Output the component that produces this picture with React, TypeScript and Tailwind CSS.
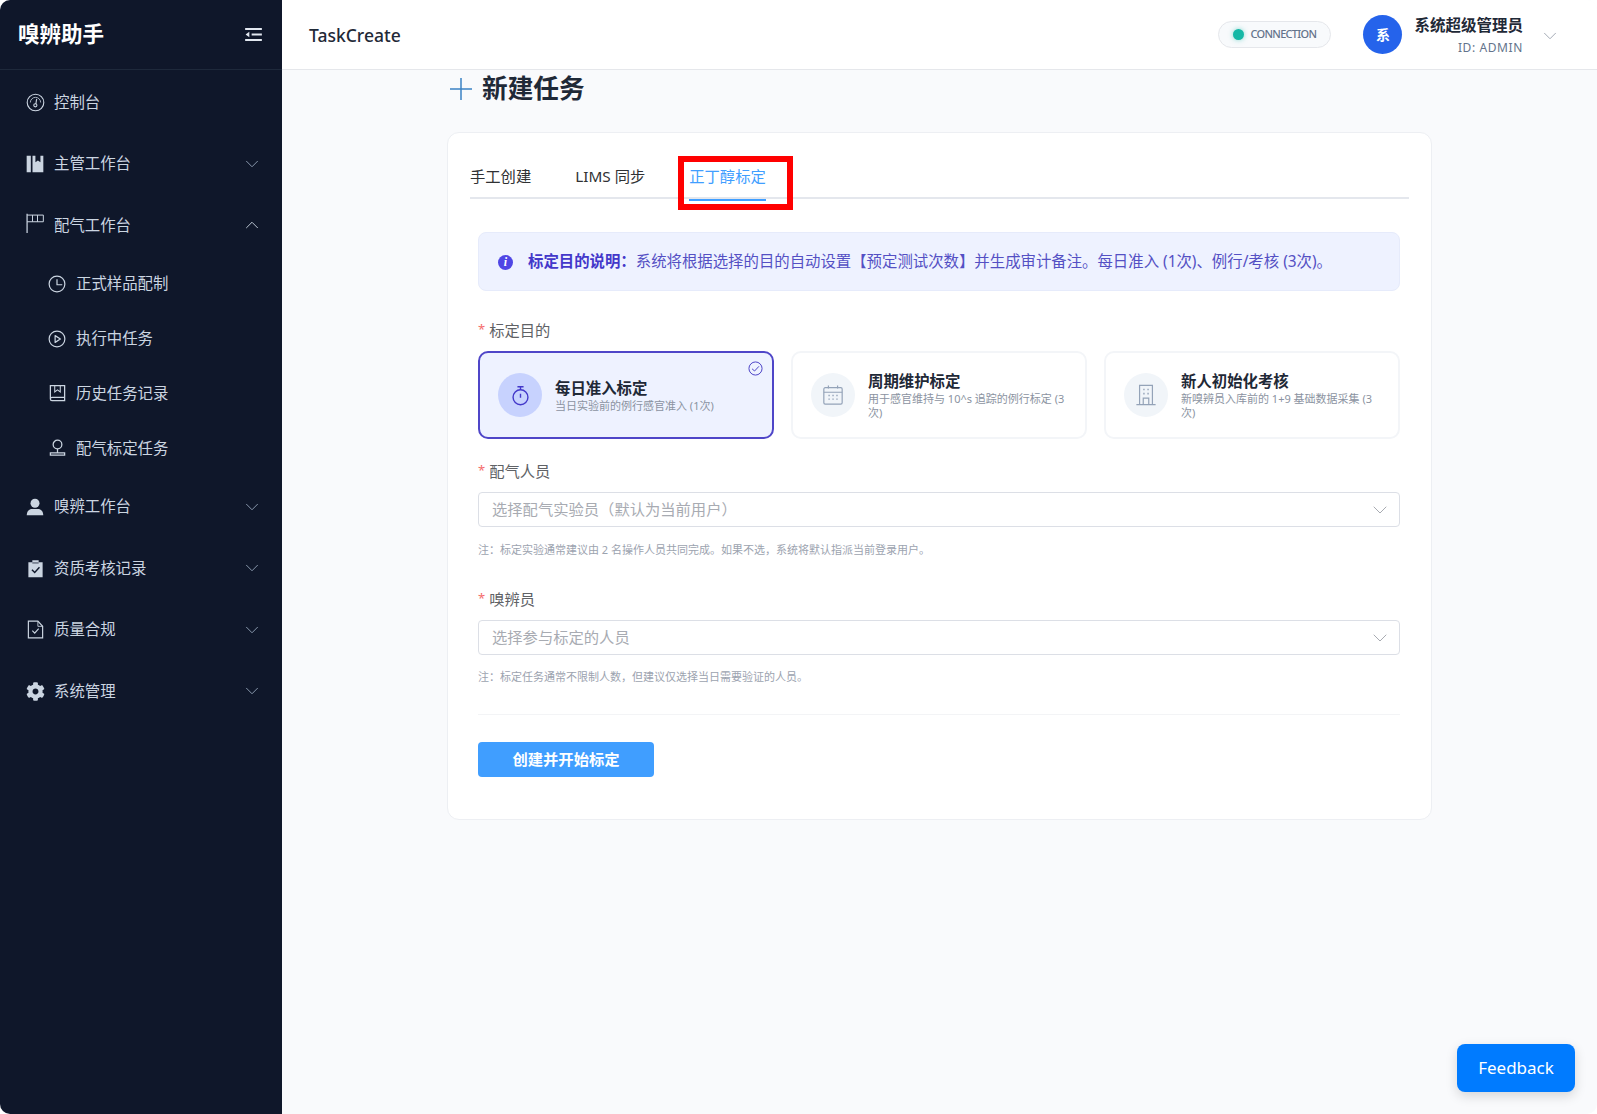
import React from 'react';
import { FaCog } from 'react-icons/fa';
import { ChevronDown, ChevronUp } from 'lucide-react';

type IconProps = { className?: string };

const Odometer = ({ className }: IconProps) => (
  <svg viewBox="0 0 24 24" fill="none" stroke="currentColor" strokeWidth="1.4" className={className}>
    <circle cx="12" cy="12" r="10.5" />
    <path d="M5.5 12a6.5 6.5 0 0 1 13 0" strokeWidth="1" />
    <path d="M13.5 7.5 12.4 14" />
    <circle cx="11.8" cy="15.5" r="2" />
  </svg>
);

const Collection = ({ className }: IconProps) => (
  <svg viewBox="0 0 24 24" fill="currentColor" className={className}>
    <path d="M2 2h5v20H2z" />
    <path d="M9 2h3.5v8l3-2.2 3 2.2V2H22v20H9z" />
  </svg>
);

const WindPower = ({ className }: IconProps) => (
  <svg viewBox="0 0 24 24" fill="none" stroke="currentColor" strokeWidth="1.2" className={className}>
    <path d="M2.5 1v23" strokeWidth="1.5" />
    <path d="M2.5 2.5H22v8H2.5M9 2.5v8M15 2.5v8" />
  </svg>
);

const Clock = ({ className }: IconProps) => (
  <svg viewBox="0 0 24 24" fill="none" stroke="currentColor" strokeWidth="1.6" className={className}>
    <circle cx="12" cy="12" r="10.5" />
    <path d="M12 5.5V13h7" />
  </svg>
);

const VideoPlay = ({ className }: IconProps) => (
  <svg viewBox="0 0 24 24" fill="none" stroke="currentColor" strokeWidth="1.6" className={className}>
    <circle cx="12" cy="12" r="10.5" />
    <path d="M9.5 7.5v9l7-4.5z" strokeLinejoin="round" />
  </svg>
);

const Notebook = ({ className }: IconProps) => (
  <svg viewBox="0 0 24 24" fill="none" stroke="currentColor" strokeWidth="1.6" className={className}>
    <path d="M3 19V2h18v19H5a2 2 0 0 1-2-2Zm0 0a2 2 0 0 1 2-2h16" />
    <path d="M8.5 2v8l3.5-2.5 3.500 2.500V2" strokeWidth="1.300" />
  </svg>
);

const Stamp = ({ className }: IconProps) => (
  <svg viewBox="0 0 24 24" fill="none" stroke="currentColor" strokeWidth="1.6" className={className}>
    <circle cx="12" cy="7" r="5.500" />
    <path d="M12 12.500V17M3 17.500h18v3H3z" />
  </svg>
);

const UserFilled = ({ className }: IconProps) => (
  <svg viewBox="0 0 24 24" fill="currentColor" className={className}>
    <circle cx="12" cy="7" r="6" />
    <path d="M1 23c0-5.500 3-8.500 7-8.500h8c4 0 7 3 7 8.500z" />
  </svg>
);

const Checked = ({ className }: IconProps) => (
  <svg viewBox="0 0 24 24" className={className}>
    <path fill="currentColor" d="M8 1.500h8V4h5v19H3V4h5z" />
    <path fill="none" stroke="#0f172a" strokeWidth="1.800" d="m7.500 13.500 3.500 3.500 6-6.500" />
    <path stroke="#0f172a" strokeWidth="1" d="M8 5h8" />
  </svg>
);

const DocumentChecked = ({ className }: IconProps) => (
  <svg viewBox="0 0 24 24" fill="none" stroke="currentColor" strokeWidth="1.500" className={className}>
    <path d="M3 1.500h12l6 6.500v14.500H3z" />
    <path d="M15 1.500V8h6" strokeWidth="1.100" />
    <path d="m8 13.500 3 3 5-5.500" />
  </svg>
);

const Fold = ({ className }: IconProps) => (
  <svg viewBox="0 0 18 14" fill="currentColor" className={className}>
    <path d="M0 0h18v2.200H0zM0 11.800h18V14H0zM7 5.900h11v2.200H7z" />
    <path d="M4.500 4v6L.5 7z" />
  </svg>
);

const Timer = ({ className }: IconProps) => (
  <svg viewBox="0 0 24 24" fill="none" stroke="currentColor" strokeWidth="1.600" className={className}>
    <circle cx="12" cy="14" r="8.500" />
    <path d="M8.500 2h7M12 2v3.500M12 10v4.500" />
  </svg>
);

const CalendarIcon = ({ className }: IconProps) => (
  <svg viewBox="0 0 24 24" fill="none" stroke="currentColor" strokeWidth="1.300" className={className}>
    <rect x="2" y="4" width="20" height="18" rx="1.500" />
    <path d="M2 9h20M7 1.500V5M17 1.500V5" />
    <path d="M7 12.500h1.500M11.300 12.500h1.500M15.600 12.500h1.500M7 16.500h1.500M11.300 16.500h1.500M15.600 16.500h1.500" strokeWidth="1.500" />
  </svg>
);

const OfficeBuilding = ({ className }: IconProps) => (
  <svg viewBox="0 0 24 24" fill="none" stroke="currentColor" strokeWidth="1.300" className={className}>
    <path d="M1.500 22.500h21M5 22.500V1.500h14v21" />
    <path d="M9 6h1.500M13.500 6H15M9 10.500h1.500M13.500 10.500H15" strokeWidth="1.700" />
    <path d="M9 22.500V15.500h6v7" />
  </svg>
);

const CircleCheck = ({ className }: IconProps) => (
  <svg viewBox="0 0 24 24" fill="none" stroke="currentColor" strokeWidth="1.600" className={className}>
    <circle cx="12" cy="12" r="10.500" />
    <path d="m6.500 12.500 4 3.500 7-7.500" />
  </svg>
);

const ThinPlus = ({ className }: IconProps) => (
  <svg viewBox="0 0 24 24" fill="none" stroke="currentColor" strokeWidth="1.500" className={className}>
    <path d="M12 1v22M1 12h22" />
  </svg>
);

const InfoDot = ({ className }: IconProps) => (
  <span className={className}>
    <span className="[font-family:'Liberation_Serif',serif] italic font-bold text-[12px] leading-none text-white">i</span>
  </span>
);

const NavRow = ({ icon, label, arrow }: { icon: React.ReactNode; label: string; arrow?: 'up' | 'down' }) => (
  <div className="flex h-[61.500px] items-center pl-[25px] pr-[19px] text-[#cbd5e1]">
    <span className="flex h-[20px] w-[20px] items-center justify-center">{icon}</span>
    <span className="ml-[9px] flex-1 text-[15.400px]">{label}</span>
    {arrow === 'down' && <ChevronDown className="h-[22px] w-[22px] text-[#94a3b8]" strokeWidth={1} />}
    {arrow === 'up' && <ChevronUp className="h-[22px] w-[22px] text-[#cbd5e1]" strokeWidth={1} />}
  </div>
);

const SubRow = ({ icon, label }: { icon: React.ReactNode; label: string }) => (
  <div className="flex h-[55px] items-center pl-[47px] text-[#cbd5e1]">
    <span className="flex h-[20px] w-[20px] items-center justify-center">{icon}</span>
    <span className="ml-[9px] text-[15.400px]">{label}</span>
  </div>
);

const Sidebar = () => (
  <aside className="flex w-[282px] shrink-0 flex-col bg-[#0f172a]">
    <div className="flex h-[70px] items-center justify-between border-b border-[#1e293b] pl-[18px] pr-[20px]">
      <span className="text-[21.500px] font-bold text-white">嗅辨助手</span>
      <Fold className="h-[13px] w-[17px] text-[#e2e8f0]" />
    </div>
    <nav className="flex flex-col pt-[1.500px]">
      <NavRow icon={<Odometer className="h-[19px] w-[19px]" />} label="控制台" />
      <NavRow icon={<Collection className="h-[20px] w-[20px]" />} label="主管工作台" arrow="down" />
      <NavRow icon={<WindPower className="h-[20px] w-[20px] -translate-y-[2px]" />} label="配气工作台" arrow="up" />
      <SubRow icon={<Clock className="h-[18px] w-[18px]" />} label="正式样品配制" />
      <SubRow icon={<VideoPlay className="h-[18px] w-[18px]" />} label="执行中任务" />
      <SubRow icon={<Notebook className="h-[19px] w-[19px]" />} label="历史任务记录" />
      <SubRow icon={<Stamp className="h-[19px] w-[19px]" />} label="配气标定任务" />
      <NavRow icon={<UserFilled className="h-[18px] w-[18px]" />} label="嗅辨工作台" arrow="down" />
      <NavRow icon={<Checked className="h-[19px] w-[19px]" />} label="资质考核记录" arrow="down" />
      <NavRow icon={<DocumentChecked className="h-[19px] w-[19px]" />} label="质量合规" arrow="down" />
      <NavRow icon={<FaCog className="h-[19px] w-[19px]" />} label="系统管理" arrow="down" />
    </nav>
  </aside>
);

const Header = () => (
  <header className="flex h-[70px] shrink-0 items-center border-b border-[#e5e7eb] bg-white pl-[27px] pr-[36.500px]">
    <span className="flex-1 pt-[1px] text-[17.500px] font-medium text-[#1f2937]">TaskCreate</span>
    <div className="flex h-[27px] w-[113px] items-center rounded-full border border-[#e5e7eb] bg-[#f8fafc] pl-[14px]">
      <span className="h-[11px] w-[11px] rounded-full bg-[#14b8a6] shadow-[0_0_5px_rgba(20,184,166,0.5)]" />
      <span className="ml-[6px] text-[11px] font-medium tracking-[-0.7px] text-[#64748b]">CONNECTION</span>
    </div>
    <div className="ml-[32px] flex h-[39px] w-[39px] items-center justify-center rounded-full bg-[#2563eb] text-[14px] font-bold text-white">
      系
    </div>
    <div className="ml-[12px] flex flex-col items-end pt-[3px]">
      <span className="text-[15.500px] leading-[21px] font-bold text-[#1f2937]">系统超级管理员</span>
      <span className="mt-[3px] text-[12px] leading-[18px] tracking-[0.6px] text-[#64748b]">ID: ADMIN</span>
    </div>
    <ChevronDown className="ml-[15.500px] h-[22px] w-[22px] translate-y-[1px] text-[#9ca3af]" strokeWidth={1} />
  </header>
);

const PurposeCard = ({ icon, title, desc, active }: { icon: React.ReactNode; title: string; desc: string; active?: boolean }) => (
  <div
    className={
      active
        ? 'relative flex h-[88px] w-[296px] items-center rounded-[10px] border-2 border-[#4f46c8] bg-[#eef2ff] pl-[18px] pr-[16px]'
        : 'relative flex h-[88px] w-[296px] items-center rounded-[10px] border-2 border-[#f3f5f8] bg-white pl-[18px] pr-[16px]'
    }
  >
    <div
      className={
        active
          ? 'flex h-[44px] w-[44px] shrink-0 items-center justify-center rounded-full bg-[#c7d2fe] text-[#4338ca]'
          : 'flex h-[44px] w-[44px] shrink-0 items-center justify-center rounded-full bg-[#f1f5f9] text-[#94a3b8]'
      }
    >
      {icon}
    </div>
    <div className="ml-[13px] min-w-0 pt-[3px]">
      <div className="text-[15.400px] leading-[18px] font-bold text-[#1f2937]">{title}</div>
      <div className="mt-[1px] text-[11px] leading-[14px] text-[#8b93a1]">{desc}</div>
    </div>
    {active && <CircleCheck className="absolute top-[8px] right-[9px] h-[15px] w-[15px] text-[#4f46c8]" />}
  </div>
);

const FieldLabel = ({ text, className }: { text: string; className: string }) => (
  <div className={`flex h-[22px] items-center text-[15.300px] text-[#606266] ${className}`}>
    <span className="mr-[4px] text-[13px] text-[#f56c6c]">*</span>
    {text}
  </div>
);

const SelectBox = ({ placeholder }: { placeholder: string }) => (
  <div className="mt-[10px] flex h-[35px] items-center justify-between rounded-[4px] border border-[#dcdfe6] bg-white pr-[7px] pl-[13px]">
    <span className="text-[15.300px] text-[#a8abb2]">{placeholder}</span>
    <ChevronDown className="h-[24px] w-[24px] text-[#a8abb2]" strokeWidth={1} />
  </div>
);

const TabsBar = () => (
  <div className="relative flex h-[41px] gap-[44px] border-b-2 border-[#e4e7ed] text-[15.300px] text-[#303133]">
    <span className="leading-[36px]">手工创建</span>
    <span className="leading-[36px]">LIMS 同步</span>
    <span className="relative h-[41px] leading-[36px] text-[#409eff]">
      正丁醇标定
      <span className="absolute right-0 bottom-[-2px] left-0 h-[2px] bg-[#409eff]" />
    </span>
    {/* red marker drawn over the active tab */}
    <div className="absolute top-[-2px] left-[208px] h-[54px] w-[115px] border-[6px] border-[#ff0000]" />
  </div>
);

const App = () => (
  <div className="relative flex h-[1114px] w-full overflow-hidden rounded-[10px] bg-[#f9fafc] [font-family:'Noto_Sans','Noto_Sans_CJK_SC',sans-serif]">
    <Sidebar />
    <div className="flex min-w-0 flex-1 flex-col">
      <Header />
      <main className="flex-1">
        <div className="mx-auto w-[985px]">
          <div className="flex h-[37px] items-center pt-[1px] pl-[1.500px]">
            <ThinPlus className="h-[24px] w-[24px] text-[#3b82c4]" />
            <h1 className="ml-[9.500px] text-[25.700px] leading-[36px] font-bold text-[#1f2937]">新建任务</h1>
          </div>
          <div className="mt-[25px] rounded-[12px] border border-[#edeff3] bg-white pt-[25px] pr-[22px] pb-[42px] pl-[22px]">
            <TabsBar />
            <div className="px-[8px] pr-[9px]">
              <div className="mt-[33px] flex h-[59px] items-center rounded-[8px] border border-[#e6ebfb] bg-[#eef2ff] pt-[1px] pl-[19px] text-[15.400px]">
                <InfoDot className="flex h-[15px] w-[15px] items-center justify-center rounded-full bg-[#4f46e5]" />
                <span className="ml-[15px] font-bold text-[#4338ca]">标定目的说明：</span>
                <span className="text-[#5450c4]">系统将根据选择的目的自动设置【预定测试次数】并生成审计备注。每日准入 (1次)、例行/考核 (3次)。</span>
              </div>
              <FieldLabel text="标定目的" className="mt-[28px]" />
              <div className="mt-[10px] flex justify-between">
                <PurposeCard active icon={<Timer className="h-[21px] w-[21px]" />} title="每日准入标定" desc="当日实验前的例行感官准入 (1次)" />
                <PurposeCard icon={<CalendarIcon className="h-[22px] w-[22px]" />} title="周期维护标定" desc="用于感官维持与 10^s 追踪的例行标定 (3次)" />
                <PurposeCard icon={<OfficeBuilding className="h-[22px] w-[22px]" />} title="新人初始化考核" desc="新嗅辨员入库前的 1+9 基础数据采集 (3次)" />
              </div>
              <FieldLabel text="配气人员" className="mt-[21px]" />
              <SelectBox placeholder="选择配气实验员（默认为当前用户）" />
              <p className="mt-[16px] text-[11px] leading-[14px] text-[#9ca3af]">注：标定实验通常建议由 2 名操作人员共同完成。如果不选，系统将默认指派当前登录用户。</p>
              <FieldLabel text="嗅辨员" className="mt-[31px]" />
              <SelectBox placeholder="选择参与标定的人员" />
              <p className="mt-[15px] text-[11px] leading-[14px] text-[#9ca3af]">注：标定任务通常不限制人数，但建议仅选择当日需要验证的人员。</p>
              <div className="mt-[30px] h-px bg-[#f3f4f6]" />
              <button className="mt-[27px] flex h-[35px] w-[176px] items-center justify-center rounded-[4px] bg-[#409eff] text-[15.300px] font-bold text-white">
                创建并开始标定
              </button>
            </div>
          </div>
        </div>
      </main>
    </div>
    <button className="absolute right-[22px] bottom-[22px] h-[48px] w-[118px] rounded-[8px] bg-[#007bff] text-[17px] text-white shadow-[0_4px_12px_rgba(0,0,0,0.15)]">
      Feedback
    </button>
  </div>
);

export default App;
